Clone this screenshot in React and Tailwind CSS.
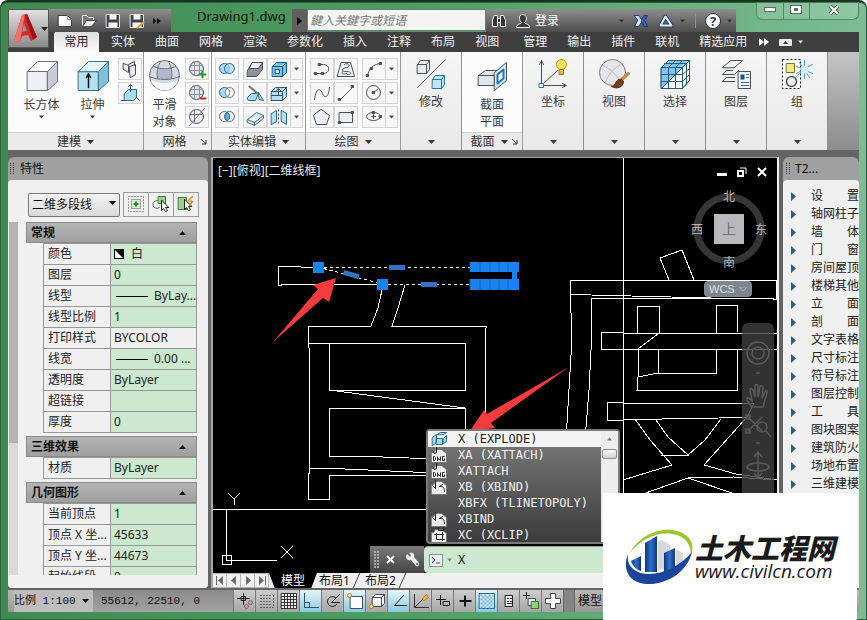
import React from 'react'
import clsx from 'clsx'

const UI = "font-['Noto_Sans','Noto_Sans_CJK_SC',sans-serif]"

const TABS_LEFT = ['实体', '曲面', '网格', '渲染', '参数化', '插入', '注释', '布局', '视图']
const TABS_RIGHT = ['管理', '输出', '插件', '联机', '精选应用']

const T20_MENU = [
  ['设', '置'], ['轴网柱子'], ['墙', '体'], ['门', '窗'], ['房间屋顶'], ['楼梯其他'],
  ['立', '面'], ['剖', '面'], ['文字表格'], ['尺寸标注'], ['符号标注'], ['图层控制'],
  ['工', '具'], ['图块图案'], ['建筑防火'], ['场地布置'], ['三维建模'],
]

const SECTIONS = [
  {
    title: '常规',
    rows: [
      ['颜色', '白', 'swatch'],
      ['图层', '0'],
      ['线型', 'ByLay...', 'line'],
      ['线型比例', '1'],
      ['打印样式', 'BYCOLOR', 'locked'],
      ['线宽', '0.00 ...', 'line'],
      ['透明度', 'ByLayer'],
      ['超链接', ''],
      ['厚度', '0'],
    ],
  },
  { title: '三维效果', rows: [['材质', 'ByLayer']] },
  {
    title: '几何图形',
    rows: [
      ['当前顶点', '1'],
      ['顶点 X 坐...', '45633'],
      ['顶点 Y 坐...', '44673'],
      ['起始线段...', '0'],
    ],
  },
]

const COMMANDS = [
  ['X (EXPLODE)', 'explode'],
  ['XA (XATTACH)', 'dwg'],
  ['XATTACH', 'dwg'],
  ['XB (XBIND)', 'bind'],
  ['XBFX (TLINETOPOLY)', null],
  ['XBIND', 'bind'],
  ['XC (XCLIP)', 'clip'],
]

const Svg = ({ size = 20, className, children }) => (
  <svg
    width={size}
    height={size}
    viewBox={`0 0 ${size} ${size}`}
    fill="none"
    stroke="#4a4f56"
    strokeLinecap="round"
    strokeLinejoin="round"
    className={clsx('shrink-0', className)}
    aria-hidden="true"
  >
    <g transform="translate(.5 .5)">{children}</g>
  </svg>
)

const Caret = ({ className }) => (
  <svg width="7" height="4" viewBox="0 0 7 4" className={clsx('shrink-0', className)} fill="currentColor" aria-hidden="true">
    <path d="M0 0h7L3.500 4z" />
  </svg>
)

/* ---------- big ribbon icons, 32 x 32 ---------- */

const BoxIcon = () => (
  <Svg size={32}>
    <path d="M1 11 11 1h20L21 11z" fill="#fff" stroke="#6b6e76" />
    <path d="M1 11h20v19H1z" fill="#eef0f5" stroke="#6b6e76" />
    <path d="M21 11 31 1v20L21 30z" fill="#c9ccd6" stroke="#6b6e76" />
  </Svg>
)

const ExtrudeIcon = () => (
  <Svg size={32}>
    <path d="M1 11h20v19H1z" fill="#b5e0f2" stroke="#3f7087" />
    <path d="M21 11 31 1v20L21 30z" fill="#7fbfdb" stroke="#3f7087" />
    <path d="M1 11 11 1h20L21 11z" fill="#e2f3fa" stroke="#3f7087" />
    <path d="M11 27V14M9 17l2-4 2 4" stroke="#111" strokeWidth="1.500" />
  </Svg>
)

const SphereIcon = () => (
  <Svg size={32}>
    <circle cx="15" cy="15" r="15" fill="#d5d9e2" stroke="#6d7078" />
    <path d="M1 19c8 5 20 5 28 0-2 7-8 11-14 11S3 26 1 19z" fill="#f6f7f9" stroke="none" />
    <path d="M9 8c4 1 8 1 12 0l1 10c-4 1-10 1-14 0z" fill="#b3b9c8" stroke="none" />
    <path d="M4 6c6 3 16 3 22 0M0 16c8 4 22 4 30 0M11 1c-3 5-4 11-3 17M19 1c3 5 4 11 3 17" stroke="#666a72" />
  </Svg>
)

const ModifyIcon = () => (
  <Svg size={32}>
    <path d="M2 6 5 2h9v9l-3 4H2z" fill="#e9ebf0" />
    <path d="M2 6h9v9M11 6l3-4" />
    <path d="M30 1 2 29" />
    <path d="M17 21l3-4h9v9l-3 4h-9z" fill="#bfe3f7" stroke="#2477a8" />
    <path d="M17 21h9v9M26 21l3-4" stroke="#2477a8" />
  </Svg>
)

const SectionIcon = () => (
  <Svg size={32}>
    <path d="M2 15l7-5h15v10l-5 5H2z" fill="#e4e6ea" />
    <path d="M2 15h16v10M18 15l6-5" />
    <path d="M18 12 30 2v18L18 30z" fill="#d3eafa" />
    <path d="M21 14l6-5v9l-6 5z" fill="#fff" stroke="#1b76c4" strokeWidth="2" />
  </Svg>
)

const CoordIcon = () => (
  <Svg size={32}>
    <path d="M4 26V2M2 6l2-4 2 4M4 27h24M25 25l4 2-4 2M5 26 20 12" />
    <rect x="2" y="25" width="4" height="4" fill="#fff" stroke="#1b76c4" />
    <circle cx="24" cy="6" r="5" fill="#ffe45c" stroke="#c98d10" />
    <path d="M22 11h4v5h-4z" fill="#e8b53a" stroke="#a87510" />
  </Svg>
)

const ViewIcon = () => (
  <Svg size={32}>
    <circle cx="14" cy="14" r="13" fill="#e6e6e8" stroke="#77797e" />
    <path d="M4 7c8 3 15 10 18 17M25 5C17 8 9 16 7 24" stroke="#b7b9be" />
    <path d="M30 15l-8 7" stroke="#c98745" strokeWidth="3" />
    <path d="M23 21c-3-1-5 1-6 4-1 2-3 3-4 3 5 3 12 1 12-5z" fill="#7b3d18" stroke="#572a0f" />
  </Svg>
)

const SelectIcon = () => (
  <Svg size={32}>
    <path d="M2 9l7-7h21v20l-7 8H2z" fill="#fff" />
    <path d="M2 9l7-7h21L2 30z" fill="#7fc4ee" stroke="none" />
    <path d="M2 9h21v21H2zM9 2h21v20M2 9l7-7M23 9l7-7M23 30l7-8M9 9v21M16 9v21M2 16h21M2 23h21M9 9l7-7M16 9l7-7M5 5h22v20M23 16l7-6M23 23l7-7M2 30 23 9" stroke="#2b5c7c" />
  </Svg>
)

const LayersIcon = () => (
  <Svg size={32}>
    <path d="M2 9l8-7h12l-8 7zM2 16l4-4M2 16h12l4-4M2 23l4-4M2 23h12M6 12h6M6 19h8" />
    <rect x="18" y="13" width="12" height="17" fill="#eef4fa" />
    <rect x="20" y="16" width="4" height="5" fill="#1b4f80" stroke="none" />
    <path d="M26 16h2M26 19h2M21 24h7M21 27h7" stroke="#2d6491" />
  </Svg>
)

const GroupIcon = () => (
  <Svg size={32}>
    <rect x="1" y="1" width="18" height="29" fill="#fff" stroke="#111" strokeDasharray="2 2" strokeLinecap="butt" />
    <rect x="5" y="5" width="8" height="9" fill="#f0ea8a" stroke="#77711f" />
    <circle cx="10" cy="23" r="5" fill="#f2f4f7" strokeWidth="1.500" />
    <path d="M14 19l8-8M23 2v18M15 8l16 7M15 15 31 6M18 4l10 15" stroke="#4aa3cf" />
    <circle cx="23" cy="11" r="4" fill="#d4f0fb" stroke="none" />
  </Svg>
)

/* ---------- small ribbon icons, 20 x 20 ---------- */

const SMALL = {
  polysolid: <path d="M3 4l5 2v7l-5-3zM8 5l6-3v4M9 7l6-2v10l-5 3z" fill="#e9ebef" />,
  press: (
    <>
      <path d="M4 10l4-4h8v8l-3 3H4z" fill="#a9daf0" stroke="#2a6d8c" />
      <path d="M10 8V1M8 3l2-2 2 2M1 17h3M16 14l3 3" />
    </>
  ),
  meshMore: (
    <>
      <circle cx="9" cy="9" r="7" fill="#e1e4ea" />
      <path d="M3 6h12M2 11h14M7 2v14M12 3v12" stroke="#8b9098" />
      <path d="M15 12v6M12 15h6" stroke="#1f9a2c" strokeWidth="2" />
    </>
  ),
  meshLess: (
    <>
      <circle cx="9" cy="9" r="7" fill="#e1e4ea" />
      <path d="M3 6h12M2 11h14M7 2v14M12 3v12" stroke="#8b9098" />
      <path d="M13 15h5" stroke="#d02222" strokeWidth="2" />
    </>
  ),
  meshOff: (
    <>
      <circle cx="9" cy="9" r="7" fill="#eceef2" />
      <path d="M7 3v11M3 7h11M17 1 2 18" stroke="#70757d" />
    </>
  ),
  union: (
    <>
      <circle cx="7" cy="9" r="5" fill="#a8d8f2" stroke="#2a6d9c" />
      <circle cx="12" cy="9" r="5" fill="#a8d8f2" fillOpacity=".7" stroke="#2a6d9c" />
    </>
  ),
  subtract: (
    <>
      <circle cx="12" cy="9" r="5" fill="#fff" stroke="#6b7683" />
      <circle cx="7" cy="9" r="5" fill="#a8d8f2" stroke="#2a6d9c" />
      <path d="M10 5c3 2 3 6 0 8-3-2-3-6 0-8z" fill="#fff" stroke="#6b7683" />
    </>
  ),
  intersect: (
    <>
      <circle cx="7" cy="9" r="5" stroke="#4f6a80" />
      <circle cx="12" cy="9" r="5" stroke="#4f6a80" />
      <path d="M10 5c3 2 3 6 0 8-3-2-3-6 0-8z" fill="#5fb1e0" stroke="#2a6d9c" />
    </>
  ),
  interfere: (
    <>
      <path d="M2 11l5-8h10v7l-6 7H2z" fill="#8d929b" />
      <path d="M7 3h10l-4 6H4z" fill="#eceef2" />
    </>
  ),
  slice: (
    <>
      <path d="M2 14l4-4h7l-3 7H3z" fill="#a9daf0" stroke="#2a6d8c" />
      <path d="M4 3l8 7" stroke="#777" strokeWidth="2" />
      <path d="M13 9l5 8-4-1z" fill="#a9daf0" stroke="#2a6d8c" />
    </>
  ),
  thicken: <path d="M2 12l9-7 7 3v3l-9 7-7-3zM2 12l7 3 9-7M9 15v3" fill="#cbe8f5" stroke="#4b6472" />,
  shell: (
    <>
      <path d="M3 7l4-4h10v10l-4 4H3z" fill="#79c4e8" stroke="#0f5f8f" />
      <path d="M3 7h10v10M13 7l4-4" stroke="#0f5f8f" />
      <rect x="6" y="10" width="4" height="4" fill="#fff" stroke="#0f5f8f" />
    </>
  ),
  faces: (
    <>
      <path d="M2 8l4-4h11v9l-4 4H2z" fill="#b6def0" stroke="#35596b" />
      <path d="M2 8h11v9M13 8l4-4M2 12h11" stroke="#35596b" />
      <path d="M9 11V5M7 7l2-2 2 2" />
    </>
  ),
  separate: (
    <>
      <path d="M2 6l5-3v11l-5 3zM12 3l5 3v11l-5-3z" fill="#b6def0" stroke="#2a6d8c" />
      <path d="M9 2v16" strokeDasharray="2 2" strokeLinecap="butt" />
    </>
  ),
  pline: (
    <>
      <path d="M3 14h8c7 0 7-9 0-9H8" />
      <path d="M2 13h2v2H2zM9 13h2v2H9zM6 4h2v2H6z" fill="#4a4f56" />
    </>
  ),
  helix: <path d="M5 3h9l4 14H1zM8 5c4-3 7 2 2 3s-6 4 0 4 5 4 1 3M6 12c-2 3 2 3 4 2" />,
  arc: (
    <>
      <path d="M3 17C4 9 9 4 17 4" />
      <path d="M2 15h2v2H2zM6 8h2v2H6zM15 3h2v2h-2z" fill="#4a4f56" />
    </>
  ),
  spline: <path d="M2 16c2-13 6-11 8-6s6 5 7-6" />,
  line: (
    <>
      <path d="M4 16 16 4" />
      <path d="M2 15h2v2H2zM15 2h2v2h-2z" fill="#4a4f56" />
    </>
  ),
  circle: (
    <>
      <circle cx="9" cy="9" r="7" />
      <path d="M9 9l4-3" />
      <path d="M8 8h2v2H8z" fill="#4a4f56" />
    </>
  ),
  polygon: <path d="M9 2l8 6-3 9H4L1 8z" fill="#eceef2" />,
  rect: (
    <>
      <path d="M3 5h13v10H3z" fill="#eceef2" />
      <path d="M2 14h2v2H2zM15 4h2v2h-2z" fill="#4a4f56" />
    </>
  ),
  ellipse: (
    <>
      <ellipse cx="9" cy="9" rx="7" ry="4" />
      <path d="M9 7v4M7 9h4M15 8h2v2h-2zM8 4h2v2H8z" fill="#4a4f56" />
    </>
  ),
}

const SmallButton = ({ name }) => (
  <button
    aria-label={name}
    className="flex h-[22px] w-6 shrink-0 items-center justify-center border border-[#d4d4d4] bg-[#f7f7f7]"
  >
    <Svg>{SMALL[name]}</Svg>
  </button>
)

const SplitButton = ({ name }) => (
  <div className="flex">
    <SmallButton name={name} />
    <button aria-label={`${name} options`} className="flex w-3 items-center justify-center border border-l-0 border-[#d4d4d4] bg-[#f7f7f7] text-[#444]">
      <Caret className="w-[5px]" />
    </button>
  </div>
)

const BigButton = ({ icon, lines, caret, className }) => (
  <button className={clsx('flex flex-col items-center pt-0.5 text-xs leading-[17px] text-[#3c3c3c]', className)}>
    {icon}
    <span className="mt-1 flex flex-col">
      {lines.map((line) => (
        <span key={line}>{line}</span>
      ))}
    </span>
    {caret && <Caret className="mt-0.5 w-[5px]" />}
  </button>
)

const Launcher = () => (
  <svg width="6" height="6" viewBox="0 0 6 6" stroke="#333" fill="none" aria-hidden="true">
    <path d="M0 0l5 5M5 1v4H1" />
  </svg>
)

const Panel = ({ title, caret, launcher, className, children }) => (
  <div className={clsx('flex shrink-0 flex-col border-r border-[#9b9b9b] bg-[#fcfcfc]', className)}>
    <div className="flex flex-1 items-start pt-1.5">{children}</div>
    <div className="flex h-[18px] items-center border-t border-[#d0d0d0] bg-[#ebebeb] px-1 text-xs leading-4 text-[#333]">
      <button className="flex flex-1 items-center justify-center gap-1.5 whitespace-nowrap">
        {title}
        {caret && <Caret />}
      </button>
      {launcher && <Launcher />}
    </div>
  </div>
)

const CollapsedPanel = ({ icon, title }) => (
  <button className="flex w-[61px] shrink-0 flex-col items-center border-r border-[#8f8f8f] bg-linear-to-b from-[#f5f5f5] to-[#e9e9e9] pt-1.5 pb-1.5 text-xs leading-4 text-[#3c3c3c]">
    {icon}
    <span className="mt-1">{title}</span>
    <Caret className="mt-auto" />
  </button>
)

const Ribbon = () => (
  <div className="flex h-[98px] shrink-0 bg-linear-to-b from-[#c4c4c4] to-[#8d8d8d]">
    <Panel title="建模" caret className="w-[136px]">
      <BigButton icon={<BoxIcon />} lines={['长方体']} caret className="ml-2 w-[51px]" />
      <BigButton icon={<ExtrudeIcon />} lines={['拉伸']} caret className="w-[51px]" />
      <div className="flex flex-col gap-0.5">
        <SmallButton name="polysolid" />
        <SmallButton name="press" />
      </div>
    </Panel>
    <Panel title="网格" launcher className="w-[68px]">
      <BigButton icon={<SphereIcon />} lines={['平滑', '对象']} className="w-[41px]" />
      <div className="flex flex-col gap-0.5">
        <SmallButton name="meshMore" />
        <SmallButton name="meshLess" />
        <SmallButton name="meshOff" />
      </div>
    </Panel>
    <Panel title="实体编辑" caret className="w-[94px]">
      <div className="ml-[3px] flex flex-col gap-0.5">
        <SmallButton name="union" />
        <SmallButton name="subtract" />
        <SmallButton name="intersect" />
      </div>
      <div className="ml-1 flex flex-col gap-0.5">
        <SmallButton name="interfere" />
        <SmallButton name="slice" />
        <SmallButton name="thicken" />
      </div>
      <div className="flex flex-col gap-0.5">
        <SplitButton name="shell" />
        <SplitButton name="faces" />
        <SplitButton name="separate" />
      </div>
    </Panel>
    <Panel title="绘图" caret className="w-[95px]">
      <div className="ml-1 grid grid-cols-2 gap-y-0.5">
        <SmallButton name="pline" />
        <SmallButton name="helix" />
        <SmallButton name="spline" />
        <SmallButton name="line" />
        <SmallButton name="polygon" />
        <SmallButton name="rect" />
      </div>
      <div className="ml-1 flex flex-col gap-0.5">
        <SplitButton name="arc" />
        <SplitButton name="circle" />
        <SplitButton name="ellipse" />
      </div>
    </Panel>
    <CollapsedPanel icon={<ModifyIcon />} title="修改" />
    <Panel title="截面" caret launcher className="w-[61px]">
      <BigButton icon={<SectionIcon />} lines={['截面', '平面']} className="w-full" />
    </Panel>
    <CollapsedPanel icon={<CoordIcon />} title="坐标" />
    <CollapsedPanel icon={<ViewIcon />} title="视图" />
    <CollapsedPanel icon={<SelectIcon />} title="选择" />
    <CollapsedPanel icon={<LayersIcon />} title="图层" />
    <CollapsedPanel icon={<GroupIcon />} title="组" />
  </div>
)

/* ---------- title bar ---------- */

const AppLogo = () => (
  <svg width="26" height="34" viewBox="0 0 26 34" aria-hidden="true">
    <path d="M9 3 14 2 24 25l-6 4-3-6-6 1-2 6-6-1z" fill="#d3272b" />
    <path d="M9 3l3-1L7 30l-6-1z" fill="#f2706a" />
    <path d="M14 2l10 23-4 3L12 3z" fill="#a01419" />
    <path d="M11 11l3 8-5 1z" fill="#8d8d8d" />
  </svg>
)

const QuickAccess = () => (
  <div className="flex h-[23px] w-[122px] items-center gap-2 bg-linear-to-b from-[#8e8e8e] to-[#4d4d4d] px-2">
    <button aria-label="New">
      <Svg size={16}>
        <path d="M1 2h9l4 4v7H1z" fill="#fff" stroke="#444" />
        <path d="M10 2v4h4" stroke="#888" />
      </Svg>
    </button>
    <button aria-label="Open">
      <Svg size={16}>
        <path d="M1 13V2h4l2 2h5v3" fill="#777" stroke="#eee" />
        <path d="M1 13l4-6h10l-5 6z" fill="#ececec" stroke="#444" />
      </Svg>
    </button>
    <button aria-label="Save">
      <Svg size={16}>
        <path d="M1 1h13v13H1z" fill="#40444c" stroke="#ddd" />
        <path d="M4 1h7v5H4zM3 9h9v5H3z" fill="#f4f4f4" stroke="none" />
      </Svg>
    </button>
    <button aria-label="Save as">
      <Svg size={16}>
        <path d="M1 1h13v13H1z" fill="#40444c" stroke="#ddd" />
        <path d="M4 1h7v5H4zM3 9h9v5H3z" fill="#f4f4f4" stroke="none" />
        <path d="M8 14l6-5" stroke="#e9a23b" strokeWidth="2" />
      </Svg>
    </button>
    <button aria-label="More">
      <svg width="8" height="6" viewBox="0 0 8 6" fill="#111" aria-hidden="true">
        <path d="M0 0l4 3-4 3zM4 0l4 3-4 3z" />
      </svg>
    </button>
  </div>
)

const InfoCenter = () => (
  <div className="flex min-w-0 flex-1 items-center bg-linear-to-b from-[#8e8e8e] to-[#4d4d4d] pr-1 text-xs text-white">
    <button aria-label="Find" className="ml-[5px]">
      <Svg size={16}>
        <path d="M3 2h3v3h3V2h3l2 5v6H9V9H6v4H1V7z" fill="#333" stroke="#eee" />
        <path d="M6 5v4M9 5v4" stroke="#eee" />
      </Svg>
    </button>
    <button className="ml-2 flex items-center gap-1 leading-4">
      <Svg size={16}>
        <path d="M7 1c6 0 4 7 2 8 1 2 5 1 5 5H1c0-4 4-3 5-5-2-1-4-8 1-8z" fill="#3a3a3a" stroke="#f3f3f3" />
      </Svg>
      登录
    </button>
    <Caret className="ml-auto w-[5px] text-[#333]" />
    <button aria-label="Exchange" className="ml-[9px]">
      <Svg size={16}>
        <path d="M1 2h4l3 4 3-4h3l-3 5 3 6h-3L8 9l-3 4H1l3-6z" fill="#d7e6fa" stroke="#1d3a7a" />
        <path d="M11 2h3l-3 5 3 6h-3L8 8z" fill="#3c68bd" stroke="#1d3a7a" />
      </Svg>
    </button>
    <button aria-label="Apps" className="ml-[9px] flex items-center gap-1.5">
      <Svg size={16}>
        <path d="M7 3 2 12h11z" stroke="#2b3f6a" strokeWidth="4" />
        <path d="M7 3 2 12h11z" stroke="#e6edf8" strokeWidth="2" />
      </Svg>
      <Caret className="w-[5px] text-[#333]" />
    </button>
    <span className="ml-2.5 h-3.5 w-px bg-[#8f8f8f]" />
    <button aria-label="Help" className="ml-[9px] flex items-center gap-1.5">
      <span className="flex size-4 items-center justify-center rounded-full border border-[#24303f] bg-white text-[13px] leading-3 font-bold text-[#24406f]">
        ?
      </span>
      <Caret className="w-[5px] text-[#333]" />
    </button>
  </div>
)

const WindowButtons = () => (
  <div className="ml-5 flex h-5 w-[103px] shrink-0 rounded-b-md border border-t-0 border-[#4b8a64] bg-white/15">
    <button aria-label="Minimize" className="flex flex-1 items-center justify-center">
      <span className="h-[5px] w-3 border border-[#55705f] bg-white" />
    </button>
    <button aria-label="Restore" className="flex flex-1 items-center justify-center border-x border-[#4b8a64]">
      <span className="flex h-[9px] w-3 items-center justify-center border border-[#55705f] bg-white">
        <span className="h-[3px] w-1 bg-[#55705f]" />
      </span>
    </button>
    <button aria-label="Close" className="flex w-12 items-center justify-center">
      <svg width="12" height="10" viewBox="0 0 12 10" fill="none" aria-hidden="true">
        <path d="M2 1l8 8M10 1 2 9" stroke="#4a6556" strokeWidth="4" />
        <path d="M2 1l8 8M10 1 2 9" stroke="#fff" strokeWidth="2" />
      </svg>
    </button>
  </div>
)

const Tab = ({ children }) => <button className="px-2.5 whitespace-nowrap">{children}</button>

const Header = () => (
  <header className="flex shrink-0">
    <div className="flex w-[41px] shrink-0 flex-col pt-[9px]">
      <button aria-label="Menu" className="flex h-[39px] items-center gap-0.5 border border-[#555] bg-linear-to-b from-[#e2e2e2] to-[#8b8b8b] pl-1 text-[#222]">
        <AppLogo />
        <Caret />
      </button>
      <div className="flex-1 bg-[#3f3f3f]" />
    </div>
    <div className="min-w-0 flex-1">
      <div className="flex h-8 items-start">
        <div className="flex h-full min-w-0 flex-1 pt-[9px]">
          <QuickAccess />
          <h1 className="w-[121px] shrink-0 pl-[26px] text-[13px] leading-[15px] whitespace-nowrap text-[#111]">Drawing1.dwg</h1>
          <button aria-label="Show search" className="flex w-[15px] shrink-0 items-center justify-center bg-[#5f5f5f]">
            <svg width="5" height="8" viewBox="0 0 5 8" aria-hidden="true">
              <path d="M0 0l5 4-5 4z" fill="#000" />
            </svg>
          </button>
          <input
            aria-label="鍵入关鍵字或短语"
            placeholder="鍵入关鍵字或短语"
            className="h-[22px] w-[179px] shrink-0 border border-[#777] bg-[#f4f4f4] px-0.5 text-xs italic placeholder:text-[#777]"
          />
          <InfoCenter />
        </div>
        <WindowButtons />
      </div>
      <nav className="flex h-5 items-center bg-[#3f3f3f] text-xs leading-4 text-[#f0f0f0]">
        <button className="mr-0.5 ml-[5px] h-full w-[45px] rounded-t-xs bg-linear-to-b from-[#dedede] to-[#fcfcfc] pb-px text-[#222]">常用</button>
        {TABS_LEFT.map((tab) => (
          <Tab key={tab}>{tab}</Tab>
        ))}
        <div className="ml-1 flex">
          {TABS_RIGHT.map((tab) => (
            <Tab key={tab}>{tab}</Tab>
          ))}
        </div>
        <button aria-label="More tabs" className="ml-0.5">
          <svg width="10" height="8" viewBox="0 0 10 8" fill="#fff" aria-hidden="true">
            <path d="M0 0l5 4-5 4zM5 0l5 4-5 4z" />
          </svg>
        </button>
        <button aria-label="Collapse ribbon" className="ml-2.5 flex items-center gap-1.5">
          <svg width="13" height="7" viewBox="0 0 13 7" aria-hidden="true">
            <rect width="13" height="7" rx="1" fill="#e8e8e8" />
            <path d="M4 5l2.500-3L9 5z" fill="#333" />
          </svg>
          <Caret className="w-[5px]" />
        </button>
      </nav>
    </div>
  </header>
)

/* ---------- properties palette ---------- */

const Grip = () => (
  <svg width="4" height="12" viewBox="0 0 4 12" fill="none" stroke="#333" strokeDasharray="1 1" className="shrink-0" aria-hidden="true">
    <path d="M.5 0v12M3.500 0v12" />
  </svg>
)

const PropertyValue = ({ value, kind }) => (
  <div className="flex items-center">
    {kind === 'swatch' && (
      <svg width="10" height="10" viewBox="0 0 10 10" className="mr-[7px]" aria-hidden="true">
        <path d="M0 0h10v10H0z" />
        <path d="M1 1v8h8z" fill="#fff" />
      </svg>
    )}
    {kind === 'line' && <span className="mr-1.5 ml-0.5 h-px w-8 shrink-0 bg-black" />}
    <span className="whitespace-nowrap">{value}</span>
  </div>
)

const PropertySection = ({ title, rows }) => (
  <section className="mb-[3px]">
    <button className="flex h-[21px] w-full items-center justify-between border border-[#8a8a8a] bg-linear-to-b from-[#b4b4b4] to-[#9f9f9f] pr-2.5 pl-1 text-xs font-bold text-[#111]">
      {title}
      <Caret className="rotate-180" />
    </button>
    <table className="ml-[17px] w-[154px] table-fixed border-collapse text-xs leading-5 text-[#222]">
      <tbody>
        {rows.map(([label, value, kind]) => (
          <tr key={label} className="h-[21px]">
            <th className="w-[67px] overflow-hidden border border-[#979797] p-0 pl-1 text-left font-normal whitespace-nowrap">{label}</th>
            <td className={clsx('overflow-hidden border border-[#979797] p-0 pl-[3px]', kind !== 'locked' && 'bg-[#cce8cf]')}>
              <PropertyValue value={value} kind={kind} />
            </td>
          </tr>
        ))}
      </tbody>
    </table>
  </section>
)

const PaletteButton = ({ label, children }) => (
  <button aria-label={label} className="-ml-px flex h-[25px] w-[26px] items-center justify-center border border-[#9a9a9a] bg-[#f0f0f0]">
    <Svg size={18}>{children}</Svg>
  </button>
)

const Properties = () => (
  <aside className="flex w-[200px] shrink-0 flex-col overflow-hidden rounded-t-md rounded-b bg-[#a0a0a0]">
    <h2 className="flex h-[23px] shrink-0 items-center gap-1.5 pl-0.5 text-xs text-[#111]">
      <Grip />
      特性
    </h2>
    <div className="flex min-h-0 flex-1 flex-col rounded-t bg-[#f0f0f0] pb-[13px]">
      <div className="mt-[11px] ml-5 flex shrink-0 items-center gap-1">
        <div className="relative">
          <select
            aria-label="二维多段线"
            className="h-6 w-[92px] appearance-none rounded-xs border border-[#777] bg-linear-to-b from-[#f4f4f4] to-[#d9d9d9] pl-[3px] text-xs text-[#111]"
          >
            <option>二维多段线</option>
          </select>
          <Caret className="pointer-events-none absolute top-2.5 right-1" />
        </div>
        <div className="flex">
          <PaletteButton label="Pick add">
            <path d="M1 1h15v15H1z" strokeDasharray="1 2" strokeLinecap="butt" stroke="#444" />
            <path d="M4 4h9v9H4z" fill="#d8efd8" strokeDasharray="1 1" strokeLinecap="butt" stroke="#555" />
            <path d="M8.500 6v5M6 8.500h5" stroke="#1f8a2c" strokeWidth="2" strokeLinecap="butt" />
          </PaletteButton>
          <PaletteButton label="Select objects">
            <path d="M6 1h7v7H6z" fill="#9cd08c" stroke="#3d7a35" />
            <path d="M5 5a4 4 0 1 0 2 7" stroke="#666" />
            <path d="M9 5v10l2-2 2 3 2-1-2-3h3z" fill="#fff" stroke="#222" />
          </PaletteButton>
          <PaletteButton label="Quick select">
            <path d="M1 2h8v12H1z" fill="#9cd08c" stroke="#3d7a35" />
            <path d="M7 4v10l2-2 2 3 2-1-2-3h3z" fill="#fff" stroke="#222" />
            <path d="M15 1l-4 4 4 1-3 4" stroke="#d98a1e" strokeWidth="1.500" />
          </PaletteButton>
        </div>
      </div>
      <div className="mt-[5px] flex min-h-0 flex-1 gap-2">
        <div className="ml-px flex w-[9px] shrink-0 flex-col bg-[#d9d9d9]">
          <div className="h-[221px] bg-[#b4b4b4]" />
        </div>
        <div className="w-[171px] overflow-hidden">
          {SECTIONS.map((section) => (
            <PropertySection key={section.title} {...section} />
          ))}
        </div>
      </div>
    </div>
  </aside>
)

/* ---------- drawing area ---------- */

const GRIPS_TOP = [470, 480, 490, 499, 508]

const Drawing = () => (
  <svg className="absolute inset-0 h-full w-full" aria-hidden="true">
    <g transform="translate(-213 -158)" fill="none" stroke="#fff" shapeRendering="crispEdges">
      {/* first character */}
      <path d="M318 267h-17l-1-1h-22v19h3v-1h101" />
      <path d="M382 290l-4 18-7 18h-63v21l1 1v125h-1v26h21v-24h110M405 285l-7 23-6 18h95l-2 4v110" />
      <path d="M308 343h157v47H329v-47M329 390l136 18M329 408h136v50M329 408v48h27l80 3M309 468l36 1 90 4" />
      <path d="M318 267h152M318 267l64 17M382 284h90" strokeDasharray="3 3" />
      {/* second character */}
      <path d="M623 100v500" />
      <path d="M669 280l-9-22 22-8 12 30" />
      <path d="M566 440l5-85v-42l-1-33h206v19h-3v-1H591v52l-2 40-4 50M570 294l21 1 40 1 40 1 40 1" />
      <path d="M638 333l-1-27h23l-1 27-21 16M716 333v-28h22l-1 28" />
      <path d="M601 350v-18l22 1h155M601 350l22-1h155" />
      <path d="M638 349v28l-1 13h101l-1-41M658 349v24h58v-24M638 377l20-4" />
      <path d="M607 402h16v1h131l-7 14-43 48 32 9 42 6M607 402v18h16v-1h39l57-1 28-1" />
      <path d="M635 419l15 21 22 25-49 15M656 420l12 17 20 18 17-15 16-21M661 455h28M640 495l48-17 50 17M688 478l46-1 44 3" />
      {/* ucs */}
      <path d="M200 509h423M226 509v51h51M222 555h9v9h-9zM228 493l6 6 6-6M234 499v6M281 546l12 12M293 546l-12 12" />
    </g>
    <g transform="translate(-213 -158)" fill="#1683f0">
      <rect x="313" y="262" width="11" height="11" />
      <rect x="377" y="279" width="11" height="11" />
      <g fill="#2f74c4">
        <rect x="389" y="265" width="16" height="5" />
        <rect x="421" y="282" width="16" height="5" />
        <rect x="343" y="272" width="16" height="5" transform="rotate(15 351 275)" />
      </g>
      <rect x="512" y="266" width="5" height="20" />
      {GRIPS_TOP.map((x) => (
        <g key={x}>
          <rect x={x} y="262" width="11" height="10" />
          <rect x={x} y="279" width="11" height="11" />
          <path d={`M${x} 262v10M${x} 279v11`} stroke="#1a62b5" />
        </g>
      ))}
    </g>
    <g transform="translate(-213 -158)" fill="#f53b3b">
      <path d="M336 278l-7 24-6-4-50 44 45-53-5-4z" />
      <path d="M470 431l14-21 3 4 82-47-78 56 4 5z" />
    </g>
  </svg>
)

const Compass = () => (
  <svg width="80" height="82" viewBox="0 0 80 82" className="absolute top-[31px] right-[6px]" fontSize="12" fill="#b5b5b5" textAnchor="middle" aria-hidden="true">
    <circle cx="38" cy="40" r="32" fill="none" stroke="#363636" strokeWidth="7" />
    <rect x="23" y="25" width="30" height="30" fill="#b9b9bb" />
    <text x="38" y="45" fill="#707074" fontSize="14">上</text>
    <text x="38" y="12">北</text>
    <text x="38" y="78">南</text>
    <text x="6" y="45">西</text>
    <text x="70" y="45">东</text>
  </svg>
)

const NavBar = () => (
  <div className="absolute top-[165px] right-[3px] bottom-0 w-8 rounded-t-md bg-[#3f3f3f]/80 pt-3">
    <svg width="32" height="150" viewBox="0 0 32 150" fill="none" stroke="#5a5a5a" strokeWidth="1.500" aria-hidden="true">
      <circle cx="16" cy="18" r="11" />
      <circle cx="16" cy="18" r="6" />
      <path d="M10 72c-4-5-6-8-5-9s3 1 5 3l-2-11c0-2 2-2 3 0l2 7V51c0-2 3-2 3 0v11l2-10c0-2 3-1 3 0l-1 11 3-6c1-2 3-1 2 1l-4 14z" />
      <path d="M6 82l14 14M20 82 6 96M4 80h4v4H4zM4 94h4v4H4z" />
      <circle cx="20" cy="92" r="5" />
      <path d="M24 96l5 6M16 118v24M12 122l4-5 4 5M12 138l4 5 4-5" />
      <ellipse cx="16" cy="132" rx="11" ry="4" />
      <path d="M14 38h4M14 108h4" />
    </svg>
  </div>
)

const CommandIcon = ({ kind }) => {
  if (!kind) return <span className="w-4" />
  if (kind === 'explode') {
    return (
      <Svg size={16}>
        <path d="M1 6l4-3v8l-4 3zM6 3l3-2h6l-3 2zM5 7h6v6H5zM12 7l3-3v6l-3 2z" fill="#a9dcf0" stroke="#24708f" />
      </Svg>
    )
  }
  return (
    <Svg size={16}>
      <path d="M0 5h2l2-3h6l5 4v9H0z" fill="#ececec" stroke="#777" />
      {kind === 'dwg' && (
        <>
          <path d="M5 0v5l-2 1-1-2" stroke="#111" />
          <path d="M2 9v4h1l1-1v-2L3 9zM6 9v4l1-2 2 2V9M13 9h-2v4h2v-2" stroke="#223" strokeLinecap="butt" />
        </>
      )}
      {kind === 'bind' && <path d="M4 1v8l-3-3M8 7c4-1 5 2 5 5M8 7l3-2" stroke="#222" />}
      {kind === 'clip' && <path d="M3 7h9M11 5v8M5 6v6h8M7 0v3h5V0" stroke="#222" />}
    </Svg>
  )
}

const CommandLine = () => (
  <div className="absolute right-0 bottom-0 left-[157px] flex h-[27px] text-xs">
    <div className="flex w-[54px] items-center bg-linear-to-b from-[#7b7b7b] to-[#444] pl-1">
      <svg width="5" height="17" viewBox="0 0 5 17" stroke="#aaa" strokeWidth="2" strokeDasharray="2 1" aria-hidden="true">
        <path d="M1 0v17M4 0v17" />
      </svg>
      <button aria-label="Close command line" className="ml-[7px]">
        <svg width="9" height="9" viewBox="0 0 9 9" stroke="#f1f1f1" strokeWidth="2" aria-hidden="true">
          <path d="M1 1l7 7M8 1 1 8" />
        </svg>
      </button>
      <button aria-label="Customize" className="ml-2.5">
        <svg width="15" height="15" viewBox="0 0 15 15" aria-hidden="true">
          <path d="M1 4l1-2 3 3 1-2-2-2c4-1 6 1 5 4l5 6c1 2-1 4-3 3L6 8C3 9 1 7 1 4z" fill="#eee" />
          <circle cx="12" cy="12" r="1" fill="#555" />
        </svg>
      </button>
    </div>
    <div className="flex min-w-0 flex-1 items-center rounded-l-sm border-t border-[#8f9c90] bg-[#cce8cf] pl-[5px]">
      <svg width="14" height="13" viewBox="0 0 14 13" fill="none" stroke="#3b4652" aria-hidden="true">
        <rect x=".5" y=".5" width="13" height="12" fill="#eef0f4" stroke="#8995a0" />
        <path d="M3 3l3 3-3 3M7 9h4" />
      </svg>
      <Caret className="mr-1.5 ml-1 w-[5px] text-[#7c8a7e]" />
      <input aria-label="Command" defaultValue="X" className="w-32 bg-transparent font-['DejaVu_Sans_Mono',monospace] text-xs text-[#222] outline-none" />
    </div>
    {/* autocomplete list, opens upwards from the input */}
    <div className="absolute bottom-[29px] left-14 flex h-[115px] w-[194px] rounded-sm border-2 border-[#7a7a7a] bg-linear-to-b from-[#7d7d7d] to-[#3c3c3c]">
      <ul className="min-w-0 flex-1">
        {COMMANDS.map(([text, kind], index) => (
          <li key={text}>
            <button
              className={clsx(
                "flex h-4 w-full items-center gap-[11px] pl-[3px] font-['DejaVu_Sans_Mono',monospace] text-xs leading-4 whitespace-nowrap",
                index === 0 ? 'bg-[#f4f4f4] text-[#222]' : 'text-[#f2f2f2]'
              )}
            >
              <CommandIcon kind={kind} />
              {text}
            </button>
          </li>
        ))}
      </ul>
      <div className="flex w-[17px] flex-col items-center bg-[#ededed]">
        <Caret className="mt-1.5 mb-2 w-[5px] rotate-180 text-[#777]" />
        <div className="h-2.5 w-[15px] rounded-xs border border-[#8d8d8d] bg-linear-to-b from-[#fafafa] to-[#cfcfcf]" />
      </div>
    </div>
  </div>
)

const SheetNav = ({ label, d }) => (
  <button aria-label={label} className="flex w-3.5 items-center justify-center border border-l-0 border-[#b5b5b5] bg-[#f0f0f0]">
    <svg width="8" height="9" viewBox="0 0 8 9" fill="#6a6a6a" aria-hidden="true">
      <path d={d} />
    </svg>
  </button>
)

const SheetTabs = () => (
  <div className="flex h-[15px] shrink-0 bg-[#f0f0f0] text-xs leading-[15px] text-[#111]">
    <SheetNav label="First" d="M0 0h1v9H0zM7 0v9L2 4.500z" />
    <SheetNav label="Previous" d="M6 0v9L1 4.500z" />
    <SheetNav label="Next" d="M2 0v9l5-4.500z" />
    <SheetNav label="Last" d="M7 0h1v9H7zM1 0v9l5-4.500z" />
    <button className="w-12 bg-black text-white [clip-path:polygon(0_0,100%_0,88%_100%,12%_100%)]">模型</button>
    <button className="flex pl-0.5">
      布局1
      <span className="ml-1.5 h-full w-px skew-x-[-24deg] bg-[#444]" />
    </button>
    <button className="ml-2 flex">
      布局2
      <span className="ml-1.5 h-full w-px skew-x-[-24deg] bg-[#444]" />
    </button>
  </div>
)

const Viewport = () => (
  <main className="flex min-w-0 flex-1 flex-col border-t border-r-2 border-l-2 border-[#a9a9a9] border-r-[#f0f0f0]">
    <div className="relative min-h-0 flex-1 bg-black">
      <Drawing />
      <div className="relative flex justify-between pt-[5px] pr-2.5 pl-[5px] text-xs leading-4 text-[#e6e6e6]">
        <span>[−][俯视][二维线框]</span>
        <div className="mt-0.5 flex h-3 items-end gap-2.5 text-white">
          <button aria-label="Minimize view">
            <svg width="10" height="10" viewBox="0 0 10 10" fill="#fff" aria-hidden="true"><path d="M0 6h10v3H0z" /></svg>
          </button>
          <button aria-label="Restore view">
            <svg width="10" height="10" viewBox="0 0 10 10" fill="none" stroke="#fff" aria-hidden="true">
              <path d="M3 1h6v6" />
              <path d="M1 4h5v5H1z" strokeWidth="2" />
            </svg>
          </button>
          <button aria-label="Close view">
            <svg width="10" height="10" viewBox="0 0 10 10" stroke="#fff" strokeWidth="2" aria-hidden="true"><path d="M1 1l8 8M9 1 1 9" /></svg>
          </button>
        </div>
      </div>
      <Compass />
      <NavBar />
      <button className="absolute top-[123px] right-[25px] flex h-4 w-12 items-center justify-between rounded-sm border border-[#848c94] bg-[#7d868e] px-1 font-['Liberation_Sans',sans-serif] text-[11px] leading-3 text-[#dde2e6]">
        WCS
        <svg width="8" height="5" viewBox="0 0 8 5" fill="none" stroke="#aab2ba" aria-hidden="true"><path d="M0 0h8L4 4z" /></svg>
      </button>
      <CommandLine />
    </div>
    <SheetTabs />
  </main>
)

/* ---------- T20 palette ---------- */

const ToolPalette = () => (
  <aside className="flex w-[76px] shrink-0 flex-col overflow-hidden rounded-t-md bg-[#a0a0a0]">
    <h2 className="flex h-[23px] shrink-0 items-center gap-[5px] pl-[3px] text-xs text-[#111]">
      <Grip />
      T2...
    </h2>
    <ul className="min-h-0 flex-1 overflow-hidden rounded-t bg-[#f0f0f0] pt-[7px]">
      {T20_MENU.map((parts) => (
        <li key={parts.join('')} className="flex h-[18px] items-center pl-2">
          <svg width="5" height="9" viewBox="0 0 5 9" fill="#2f5f80" className="shrink-0" aria-hidden="true">
            <path d="M0 0l5 4.500L0 9z" />
          </svg>
          <button className="ml-[15px] flex w-12 shrink-0 justify-between text-xs leading-[18px] whitespace-nowrap text-[#222]">
            {parts.map((part) => (
              <span key={part}>{part}</span>
            ))}
          </button>
        </li>
      ))}
    </ul>
  </aside>
)

/* ---------- status bar ---------- */

const STATUS = [
  ['infer', false, <><path d="M1 6h12M7 1v11M5 4h4v4H5z" stroke="#222" /><circle cx="14" cy="10" r="2" stroke="#8c5472" /><circle cx="10" cy="14" r="2" stroke="#8c5472" /></>],
  ['snap', false, <path d="M2 3h10M2 6h10M2 9h10M2 12h10M2 15h14M15 3v10" strokeDasharray="1 2" strokeLinecap="butt" stroke="#111" />],
  ['grid', false, <path d="M1 1h15v15H1zM4 1v15M7 1v15M10 1v15M13 1v15M1 4h15M1 7h15M1 10h15M1 13h15" fill="#eee" stroke="#333" />],
  ['ortho', true, <path d="M2 1v14h14M2 10h5v5" stroke="#24566e" />],
  ['polar', false, <path d="M15 2 7 10h8M11 5a5 5 0 1 0 1 7" stroke="#222" />],
  ['osnap', true, <><path d="M4 4h12v12H4z" fill="#fff" /><circle cx="3" cy="3" r="2" fill="#fff3c4" stroke="#b98023" /></>],
  ['osnap3d', false, <><path d="M4 5l3-3h9v9l-3 3H4z" fill="#f6f6f6" /><path d="M4 5h9v9M13 5l3-3" /><circle cx="3" cy="14" r="2" fill="#ffe6a0" stroke="#b98023" /></>],
  ['otrack', true, <path d="M13 3 4 13h12" stroke="#222" />],
  ['ducs', false, <><path d="M2 2v13h14M2 15l8-8" stroke="#333" /><path d="M10 6l4-4 2 3-4 3z" fill="#f3b04a" stroke="#c47716" /></>],
  ['dyn', false, <path d="M2 7h9M6 3v9M9 9h6v4H9z" stroke="#111" />],
  ['lwt', false, <path d="M3 8.500h12M8.500 3v11" stroke="#111" strokeWidth="2" strokeLinecap="butt" />],
  ['tpy', true, <><path d="M1 1h15v15H1z" fill="#dceffa" stroke="#24688f" /><path d="M2 3h13M2 7h13M2 11h13M2 15h13" stroke="#6fb0dc" strokeWidth="2" strokeDasharray="2 2" strokeLinecap="butt" /><path d="M4 5h11M4 9h11M4 13h11" stroke="#6fb0dc" strokeWidth="2" strokeDasharray="2 2" strokeLinecap="butt" /></>],
  ['qp', false, <path d="M5 3h7v11H5zM7 6h1M10 6h1M7 9h1M10 9h1M7 11h4" fill="#eee" stroke="#222" />],
  ['sc', false, <><path d="M1 3h6M4 0v6" stroke="#222" /><path d="M6 6h7v7H6z" fill="#eee" /><path d="M9 9h7v7H9z" fill="#8fcf7a" stroke="#3a7a2e" /></>],
  ['am', false, <path d="M6 1h5v5h5v5h-5v5H6v-5H1V6h5z" fill="#fff" stroke="#444" />],
]

const StatusBar = () => (
  <footer className="mt-0.5 flex h-[22px] shrink-0 items-stretch bg-linear-to-b from-[#b8b8b8] to-[#999] text-xs text-[#111]">
    <button className="ml-1.5 flex w-[79px] shrink-0 items-center bg-[#bdbdbd] font-['Liberation_Mono','Noto_Sans_CJK_SC',monospace] text-[11px] whitespace-nowrap">
      比例 1:100
      <Caret className="ml-1.5" />
    </button>
    <output className="flex w-[140px] shrink-0 items-center bg-linear-to-b from-[#8a8a8a] to-[#a3a3a3] pl-2 font-['Liberation_Mono',monospace] text-[11px] whitespace-nowrap">
      55612, 22510, 0
    </output>
    {STATUS.map(([name, on, icon]) => (
      <button
        key={name}
        aria-label={name}
        aria-pressed={on}
        className={clsx(
          'flex w-[22px] shrink-0 items-center justify-center border-l border-[#777]',
          on ? 'bg-linear-to-b from-[#e4f5fb] to-[#8cc8de]' : 'bg-linear-to-b from-[#cdcdcd] to-[#a6a6a6]'
        )}
      >
        <Svg size={18}>{icon}</Svg>
      </button>
    ))}
    <span className="w-3 shrink-0 border-x border-[#666] bg-[#858585]" />
    <button className="px-[3px] leading-4">模型</button>
  </footer>
)

const SiteLogo = () => (
  <div className="absolute right-2.5 bottom-0 flex h-[127px] w-[254px] items-center bg-white pl-[22px]">
    <svg width="70" height="56" viewBox="0 0 70 56" className="shrink-0" aria-hidden="true">
      <defs>
        <linearGradient id="tower" x1="0" x2="1">
          <stop offset="0" stopColor="#0f3484" />
          <stop offset=".5" stopColor="#2f73c9" />
          <stop offset="1" stopColor="#0f3484" />
        </linearGradient>
      </defs>
      <path d="M33 12l4-1 8 5v6l-6 3v15l-6 1z" fill="#d5d7dc" />
      <path d="M51 20l7 4v11l-7 5z" fill="#d5d7dc" />
      <path d="M6 32l10-5v15c-4-1-8-4-10-10z" fill="url(#tower)" />
      <path d="M20 14l12-7v36H20z" fill="url(#tower)" />
      <path d="M39 24l11-5v20l-11 4z" fill="url(#tower)" />
      <path d="M5 24C14 6 36-3 52 2c14 4 18 14 14 24 0-10-5-17-14-20C37 1 17 8 5 24z" fill="#9ac62c" />
      <path d="M3 25c-2 13 8 20 21 20 15 0 32-9 43-22-4 18-22 31-41 32C7 56-4 43 3 25z" fill="#1b459c" />
    </svg>
    <div className="text-[#1a1a1a]">
      <div className="font-['Noto_Sans_CJK_SC',sans-serif] text-[28px] leading-7 font-black italic">土木工程网</div>
      <a href="#home" className="block font-['Open_Sans',sans-serif] text-[19px] leading-5 italic">www.civilcn.com</a>
    </div>
  </div>
)

const App = () => {
  return (
    <div
      className={clsx(
        'relative flex h-screen flex-col overflow-hidden rounded-t-lg border-t-2 border-[#16351f] bg-linear-to-r from-[#3f8a52] via-[#4f9f66] to-[#7dbd94] px-2 pb-2 shadow-[inset_0_0_0_1px_#2f5f40]',
        UI
      )}
    >
      <div className="-mt-0.5 flex min-h-0 flex-1 flex-col">
        <Header />
        <Ribbon />
        <div className="flex min-h-0 flex-1 flex-col bg-[#646464] pt-[7px]">
          <div className="flex min-h-0 flex-1">
            <Properties />
            <div className="w-[3px] shrink-0" />
            <Viewport />
            <div className="w-1 shrink-0" />
            <ToolPalette />
          </div>
          <StatusBar />
        </div>
      </div>
      <SiteLogo />
    </div>
  )
}

export default App
